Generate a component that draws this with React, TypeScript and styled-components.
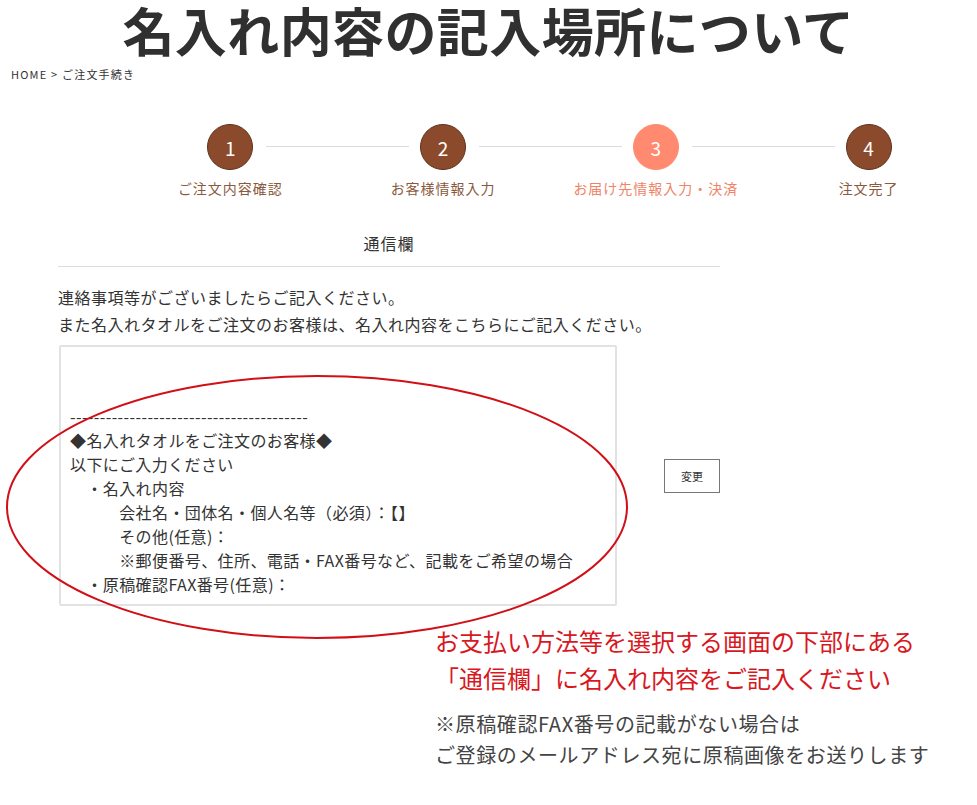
import React from "react";
import styled, { createGlobalStyle } from "styled-components";

const GlobalStyle = createGlobalStyle`
  body {
    margin: 0;
    background: #fff;
    font-family: "Noto Sans CJK JP", "Noto Sans", sans-serif;
    color: #333;
  }
`;

const Page = styled.div`
  position: relative;
  width: 977px;
  min-height: 805px;
  overflow: hidden;
`;

const Title = styled.h1`
  margin: 0;
  padding-top: 2px;
  font-size: 52px;
  line-height: 56px;
  font-weight: 700;
  text-align: center;
  color: #303030;
  letter-spacing: 0.4px;
  white-space: nowrap;
`;

const Breadcrumb = styled.div`
  margin: 7px 0 0 11px;
  font-size: 11px;
  line-height: 18px;
  letter-spacing: 1.2px;
  color: #333;
`;

const Steps = styled.ol`
  list-style: none;
  margin: 41px 0 0 124px;
  padding: 0;
  width: 851px;
  display: grid;
  grid-template-columns: repeat(4, 1fr);
`;

const Step = styled.li<{ $first?: boolean }>`
  position: relative;
  display: flex;
  flex-direction: column;
  align-items: center;

  &::before {
    content: "";
    display: ${(p) => (p.$first ? "none" : "block")};
    position: absolute;
    top: 22px;
    left: calc(-50% + 36px);
    right: calc(50% + 34px);
    height: 1px;
    background: #dcdcdc;
  }
`;

const Circle = styled.span<{ $active?: boolean }>`
  width: 46px;
  height: 46px;
  box-sizing: border-box;
  border-radius: 50%;
  background: ${(p) => (p.$active ? "#ff8a70" : "#8b4a2b")};
  border: 1px solid ${(p) => (p.$active ? "#ff8a70" : "#5e3019")};
  color: #fff;
  font-size: 19px;
  display: flex;
  align-items: center;
  justify-content: center;
`;

const StepLabel = styled.span<{ $active?: boolean }>`
  margin-top: 8px;
  font-size: 14px;
  line-height: 20px;
  letter-spacing: 1px;
  white-space: nowrap;
  color: ${(p) => (p.$active ? "#ef8468" : "#8a5a3e")};
`;

const Section = styled.section`
  width: 662px;
  margin: 32px 0 0 58px;
`;

const SectionHead = styled.h2`
  margin: 0;
  padding-bottom: 10px;
  border-bottom: 1px solid #ddd;
  font-size: 16px;
  line-height: 26px;
  font-weight: 400;
  text-align: center;
  color: #333;
  letter-spacing: 1px;
`;

const Lead = styled.p`
  margin: 17px 0 0;
  font-size: 16px;
  line-height: 27px;
  letter-spacing: 0.5px;
  color: #333;
`;

const FormRow = styled.div`
  margin-top: 7px;
  display: flex;
  align-items: center;
  justify-content: space-between;
`;

const Memo = styled.textarea`
  box-sizing: border-box;
  width: 558px;
  height: 261px;
  margin: 0 0 0 1px;
  padding: 9px 9px;
  border: 2px solid #e2e2e2;
  border-radius: 2px;
  resize: none;
  overflow: hidden;
  font-family: "Noto Sans CJK JP", "Noto Sans", sans-serif;
  font-size: 16px;
  line-height: 24px;
  letter-spacing: 0.4px;
  color: #333;
  background: #fff;
  outline: none;
`;

const ChangeButton = styled.button`
  width: 56px;
  height: 34px;
  border: 1px solid #777;
  background: #fff;
  font-family: "Noto Sans CJK JP", sans-serif;
  font-size: 11px;
  color: #333;
  padding: 0;
`;

const Note = styled.div`
  margin: 16px 0 0 435px;
`;

const RedLine = styled.p`
  margin: 0;
  font-size: 24px;
  line-height: 37px;
  color: #d7181f;
  white-space: nowrap;
`;

const GrayLine = styled.p<{ $first?: boolean }>`
  margin: ${(p) => (p.$first ? "12px" : "0")} 0 0;
  font-size: 20px;
  line-height: 31px;
  letter-spacing: 0.6px;
  color: #444;
  white-space: nowrap;
`;

const Ring = styled.svg`
  position: absolute;
  left: 0;
  top: 370px;
  pointer-events: none;
`;

const memoText = [
  "",
  "",
  "----------------------------------------",
  "◆名入れタオルをご注文のお客様◆",
  "以下にご入力ください",
  "　・名入れ内容",
  "　　　会社名・団体名・個人名等（必須）：【】",
  "　　　その他(任意)：",
  "　　　※郵便番号、住所、電話・FAX番号など、記載をご希望の場合",
  "　・原稿確認FAX番号(任意)：",
].join("\n");

const steps = [
  { n: 1, label: "ご注文内容確認" },
  { n: 2, label: "お客様情報入力" },
  { n: 3, label: "お届け先情報入力・決済", active: true },
  { n: 4, label: "注文完了" },
];

export default function App() {
  return (
    <Page>
      <GlobalStyle />
      <Title>名入れ内容の記入場所について</Title>
      <Breadcrumb>HOME &gt; ご注文手続き</Breadcrumb>

      <Steps>
        {steps.map((s, i) => (
          <Step key={s.n} $first={i === 0}>
            <Circle $active={s.active}>{s.n}</Circle>
            <StepLabel $active={s.active}>{s.label}</StepLabel>
          </Step>
        ))}
      </Steps>

      <Section>
        <SectionHead>通信欄</SectionHead>
        <Lead>
          連絡事項等がございましたらご記入ください。
          <br />
          また名入れタオルをご注文のお客様は、名入れ内容をこちらにご記入ください。
        </Lead>
        <FormRow>
          <Memo defaultValue={memoText} readOnly />
          <ChangeButton>変更</ChangeButton>
        </FormRow>
      </Section>

      <Note>
        <RedLine>お支払い方法等を選択する画面の下部にある</RedLine>
        <RedLine>「通信欄」に名入れ内容をご記入ください</RedLine>
        <GrayLine $first>※原稿確認FAX番号の記載がない場合は</GrayLine>
        <GrayLine>ご登録のメールアドレス宛に原稿画像をお送りします</GrayLine>
      </Note>

      <Ring width="640" height="275" viewBox="0 0 640 275">
        <ellipse cx="317" cy="137" rx="310" ry="131" fill="none" stroke="#d10f16" strokeWidth="2" />
      </Ring>
    </Page>
  );
}
